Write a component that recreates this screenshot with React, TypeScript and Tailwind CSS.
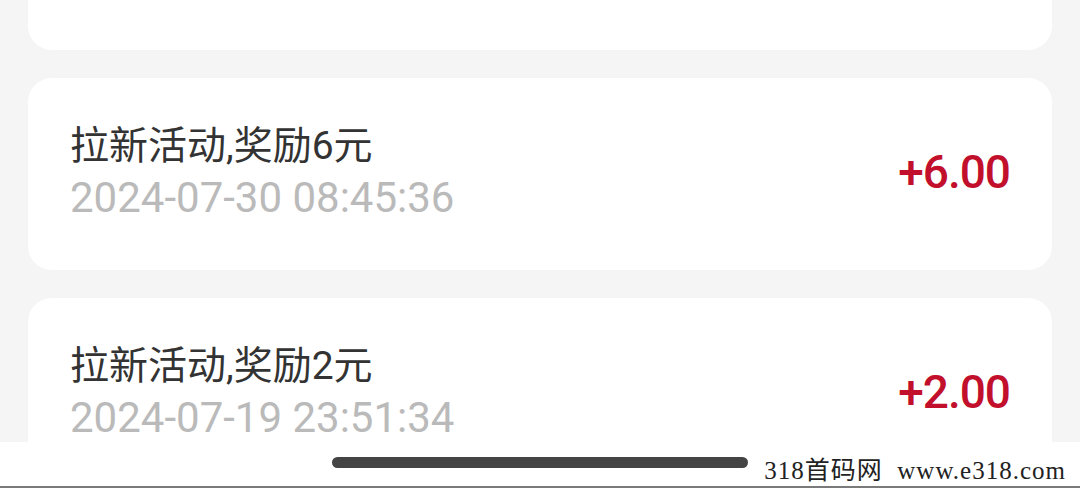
const records = [
  { title: "拉新活动,奖励6元", time: "2024-07-30 08:45:36", amount: "+6.00" },
  { title: "拉新活动,奖励2元", time: "2024-07-19 23:51:34", amount: "+2.00" },
];

const sans = "font-['Roboto','Noto_Sans_CJK_SC',sans-serif]";

function RecordCard({ title, time, amount }: { title: string; time: string; amount: string }) {
  return (
    <div className="h-[192px] shrink-0 bg-white rounded-[24px] pl-[42px] pr-[42px] flex items-center justify-between">
      <div className="flex flex-col mt-[-4px]">
        <p className={`${sans} text-[39px] leading-[52px] text-[#333333]`}>{title}</p>
        <p className={`${sans} text-[42px] leading-[52px] text-[#bababa]`}>{time}</p>
      </div>
      <p className={`${sans} text-[46px] font-medium tracking-[-1px] text-[#c10f2c] mt-[-4px]`}>{amount}</p>
    </div>
  );
}

export default function App() {
  return (
    <div className="w-[1080px] h-[488px] overflow-hidden flex flex-col bg-[#f5f5f5]">
      <div className="flex-1 overflow-hidden px-[28px] flex flex-col gap-[28px]">
        <div className="h-[50px] shrink-0 bg-white rounded-b-[24px]" />
        {records.map((r) => (
          <RecordCard key={r.time} {...r} />
        ))}
      </div>
      <div className="relative h-[44px] shrink-0 bg-white flex items-center justify-center">
        <div className="w-[416px] h-[11px] rounded-full bg-[#444444] mt-[-4px]" />
        <p className="absolute right-[14px] bottom-[0px] font-['Liberation_Serif','Noto_Sans_CJK_SC',serif] text-[25px] leading-[30px] text-[#222222] tracking-[1px] whitespace-pre">
          318首码网  www.e318.com
        </p>
      </div>
      <div className="h-[2px] shrink-0 bg-[#7a7a7a]" />
    </div>
  );
}
